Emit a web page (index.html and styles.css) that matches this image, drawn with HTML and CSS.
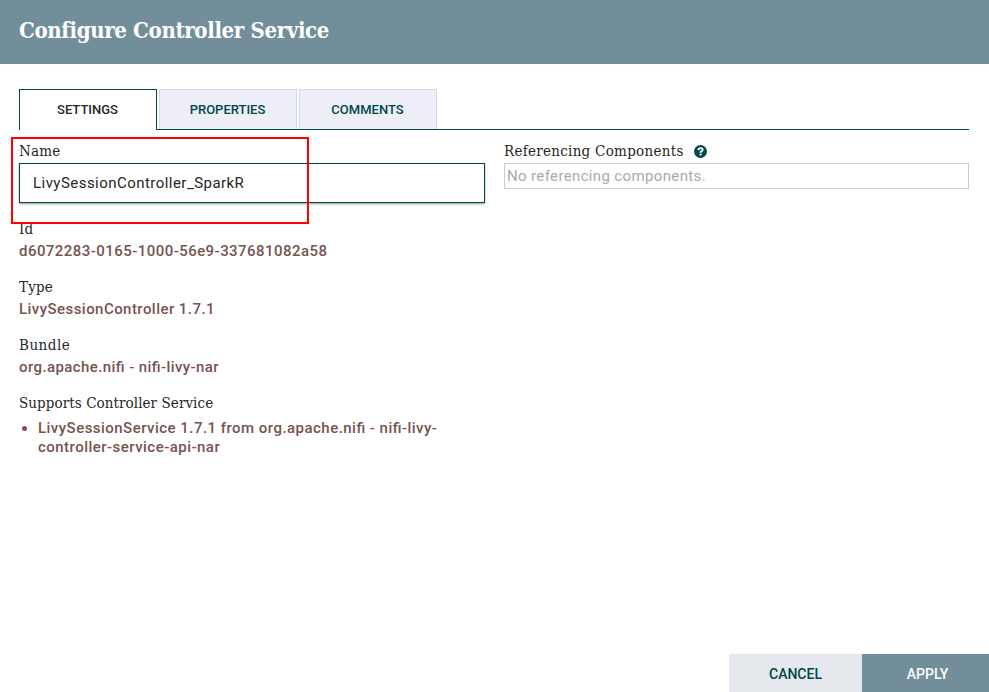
FILE: index.html
```
<!DOCTYPE html>
<html lang="en">
<head>
<meta charset="utf-8">
<title>Configure Controller Service</title>
<link rel="stylesheet" href="styles.css">
</head>
<body>
<div class="dialog">
  <header class="dialog-header"><h1>Configure Controller Service</h1></header>
  <main class="dialog-content">
    <nav class="tabs">
      <div class="tab selected">SETTINGS</div>
      <div class="tab">PROPERTIES</div>
      <div class="tab">COMMENTS</div>
    </nav>
    <div class="columns">
      <section class="column">
        <div class="name-setting">
          <div class="label">Name</div>
          <input class="name-field" type="text" value="LivySessionController_SparkR">
          <div class="highlight"></div>
        </div>
        <div class="setting">
          <div class="label">Id</div>
          <div class="value">d6072283-0165-1000-56e9-337681082a58</div>
        </div>
        <div class="setting">
          <div class="label">Type</div>
          <div class="value">LivySessionController 1.7.1</div>
        </div>
        <div class="setting">
          <div class="label bundle">Bundle</div>
          <div class="value package">org.apache.nifi - nifi-livy-nar</div>
        </div>
        <div class="setting">
          <div class="label supports">Supports Controller Service</div>
          <ul class="services">
            <li>LivySessionService 1.7.1 from org.apache.nifi - nifi-livy-<br>controller-service-api-nar</li>
          </ul>
        </div>
      </section>
      <section class="column">
        <div class="label"><span class="referencing">Referencing Components</span>
          <svg class="help" viewBox="0 0 13 13" width="13" height="13"><circle cx="6.5" cy="6.5" r="6.5" fill="#004849"/><path d="M4.400 5.100C4.500 3.700 5.400 3.100 6.600 3.100c1.200 0 2.100.6 2.100 1.700 0 1.300-2.100 1.400-2.100 2.900" fill="none" stroke="#fff" stroke-width="1.900"/><rect x="5.600" y="8.700" width="2" height="1.700" fill="#fff"/></svg>
        </div>
        <div class="references">No referencing components.</div>
      </section>
    </div>
  </main>
  <footer class="buttons">
    <button class="button cancel">CANCEL</button>
    <button class="button apply">APPLY</button>
  </footer>
</div>
</body>
</html>
```

FILE: styles.css
```
* { box-sizing: border-box; }
body { margin: 0; background: #fff; font-family: Roboto, sans-serif; color: #262626; }
.dialog { width: 989px; height: 692px; display: flex; flex-direction: column; overflow: hidden; }
.dialog-header { height: 64px; background: #728e9b; padding: 15px 19px; }
h1 { margin: 0; font: bold 22px/30px "Roboto Slab", "DejaVu Serif", serif; font-stretch: condensed; color: #fff; white-space: nowrap; letter-spacing: -0.34px; }
.dialog-content { flex: 1; padding: 25px 20px 0 19px; }
.tabs { display: flex; gap: 2px; height: 41px; background: linear-gradient(#004849, #004849) bottom / 100% 1px no-repeat; }
.tab { width: 138px; height: 40px; border: 1px solid #cfdbdf; border-bottom: 0; padding-right: 1px; background: #eeeef8; color: #004849; font-size: 13px; font-weight: 500; line-height: 40px; text-align: center; }
.tab.selected { height: 41px; border-color: #004849; background: #fff; color: #262626; }
.columns { display: grid; grid-template-columns: 466px 465px; column-gap: 19px; padding-top: 10px; }
.label { height: 22px; display: flex; align-items: center; font: 15px/20px "Roboto Slab", "DejaVu Serif", serif; font-stretch: condensed; letter-spacing: 0.2px; white-space: nowrap; }
.bundle { letter-spacing: 0.5px; }
.supports { letter-spacing: 0.08px; }
.referencing { letter-spacing: 0.28px; }
.help { margin-left: 10px; }
.name-setting { position: relative; height: 78px; }
.name-field { display: block; width: 466px; height: 40px; border: 1px solid #004849; margin: 1px 0 0; padding: 0 13px; font: 15px Roboto, sans-serif; letter-spacing: 0.46px; color: #262626; box-shadow: 0 1px 2px rgba(0,0,0,.4); outline: 0; }
.highlight { position: absolute; left: -8px; top: -3px; width: 298px; height: 87px; border: 2px solid #f00; }
.setting { height: 58px; }
.value, .services { color: #775351; font-size: 15px; font-weight: 500; line-height: 22px; letter-spacing: 0.45px; font-feature-settings: "liga" 1; white-space: nowrap; }
.package { letter-spacing: 0.41px; }
.services { margin: 5px 0 0; padding-left: 19px; line-height: 19px; letter-spacing: 0.47px; }
.references { height: 26px; margin-top: 1px; border: 1px solid #ccc; padding-left: 2px; line-height: 24px; font-size: 15px; letter-spacing: 0.36px; color: #aaa; }
.buttons { height: 38px; display: flex; justify-content: flex-end; }
.button { height: 38px; border: 0; padding: 2px 0 0; font: 500 14px Roboto, sans-serif; }
.cancel { width: 133px; background: #e5e9ed; color: #004849; }
.apply { width: 127px; background: #728e9b; color: #fff; padding-left: 4px; }
```
